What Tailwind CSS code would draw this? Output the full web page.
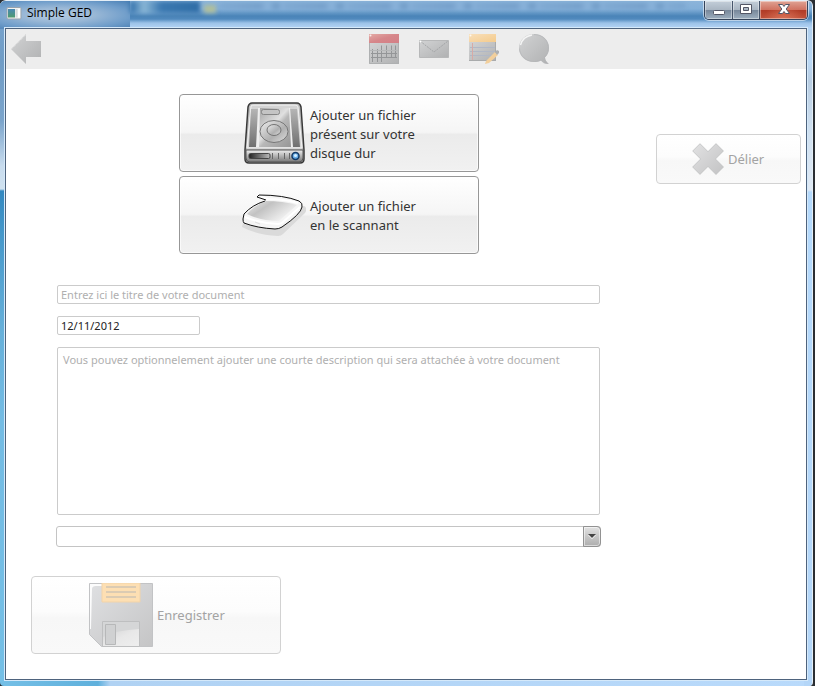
<!DOCTYPE html>
<html lang="fr">
<head>
<meta charset="utf-8">
<meta name="viewport" content="width=device-width, initial-scale=1">
<title>Simple GED</title>
<script src="https://cdn.jsdelivr.net/npm/@tailwindcss/browser@4"></script>
</head>
<body class="h-screen bg-[#2a2e33] pr-0.5 font-['Noto_Sans','Open_Sans',sans-serif] text-[#333]">
<div class="relative flex h-full flex-col overflow-hidden rounded-t-md rounded-b-sm border-t border-r border-[#e4eef6] bg-[linear-gradient(90deg,#74bfe6_0,#5fb0dc_98px,#b0d2f3_110px,#b9dafb_100%)] px-1 pb-1.5">
  <!-- Glass reflections behind the title bar and down the frame edges -->
  <div class="absolute top-0 bottom-1.5 left-0 w-2 bg-[linear-gradient(180deg,#7ba6cf_0,#6f9cc6_60px,#7ba5cc_120px,#c8dcee_165px,#d0e2f0_188px,#3388c0_190px,#4497ca_230px,#66b0da_330px,#74bce4_420px,#74bfe6_100%)]"></div>
  <div class="absolute inset-y-0 right-0 w-2 bg-[linear-gradient(180deg,#a9c8e6_0,#bad8f5_60px,#b8cde2_80px,#cfe0f0_130px,#dfe9f4_189px,#b4d9fc_191px,#b4d6f8_100%)]"></div>
  <div class="absolute inset-x-0 top-0 h-7 bg-[linear-gradient(180deg,#8cb4da_0,#83afd8_8px,#4a84b8_15px,#5089bd_18px,#9cc2e8_22px,#b4d4f5_27px)]"></div>
  <div class="absolute top-0 left-0 h-7 w-[130px] bg-[radial-gradient(ellipse_at_45%_50%,#b3cae2_0,#9ab8d6_35%,#6f9dca_70%,#4a80b5_100%)]"></div>
  <div class="absolute top-0 left-[130px] h-3 w-[70px] bg-[linear-gradient(90deg,#2d6ca8,#8ab7d6_20%,#3a78b0_45%,#2f6da6)] blur-[2px]"></div>
  <div class="absolute top-1 left-[204px] h-2 w-3 bg-[#b0bf9c] blur-[2px]"></div>
  <div class="absolute top-0.5 left-[220px] h-1.5 w-[465px] bg-[repeating-linear-gradient(90deg,#7fa9d2_0,#759fca_40px,#8cb5dc_48px,#6d98c4_56px,#8cb5dc_64px)] blur-[2px]"></div>

  <header class="relative flex h-[27px] shrink-0 items-start justify-between">
    <div class="flex h-6 items-center gap-[5px] pl-0.5">
      <svg class="h-3.5 w-4" viewBox="0 0 16 14" aria-hidden="true">
        <defs><linearGradient id="app" x2="0" y2="1"><stop stop-color="#4888b4"/><stop offset="1" stop-color="#4f9b6d"/></linearGradient></defs>
        <rect x="1" y="1.500" width="14" height="11.500" rx="1" fill="#f3f3f1" stroke="#98a3ad"/>
        <rect x="2" y="3" width="7" height="8.500" fill="url(#app)"/>
        <path d="M9.500 3h2v8.500h-2z" fill="#d6dadb"/><path d="M12 3h2v8.500h-2z" fill="#fff"/>
      </svg>
      <h1 class="text-[12px] leading-4 font-['Open_Sans',sans-serif] text-black">Simple GED</h1>
    </div>
    <div class="flex h-[19px] overflow-hidden rounded-b-[5px] border border-t-0 border-[#34435a] shadow-[0_0_0_1px_#ffffff88]">
      <button type="button" aria-label="Réduire" class="flex w-7 items-center justify-center border-r border-[#46556b] bg-[linear-gradient(180deg,#c3ced9_0,#a9b5c2_50%,#77879a_51%,#9eafbf_100%)] shadow-[inset_0_0_0_1px_#ffffff66]">
        <svg class="h-4 w-4" viewBox="0 0 16 16" aria-hidden="true"><rect x="2.500" y="8.500" width="11" height="4" rx="1" fill="#fff" stroke="#535666"/></svg>
      </button>
      <button type="button" aria-label="Agrandir" class="flex w-[27px] items-center justify-center border-r border-[#46556b] bg-[linear-gradient(180deg,#c3ced9_0,#a9b5c2_50%,#77879a_51%,#9eafbf_100%)] shadow-[inset_0_0_0_1px_#ffffff66]">
        <svg class="h-4 w-4" viewBox="0 0 16 16" aria-hidden="true"><path fill="#fff" fill-rule="evenodd" stroke="#535666" d="M2.500 2.500h11v9h-11zM5.500 5.500v3h5v-3z"/></svg>
      </button>
      <button type="button" aria-label="Fermer" class="flex w-[47px] items-center justify-center bg-[radial-gradient(ellipse_at_50%_100%,#e8856a99,transparent_60%),linear-gradient(180deg,#e0a394_0,#cf7261_48%,#b03a25_50%,#c2533a_100%)] shadow-[inset_0_0_0_1px_#ffffff66]">
        <svg class="h-4 w-4" viewBox="0 0 16 16" aria-hidden="true"><path d="M2.500 2.500h4L8 4.500l1.500-2h4L10.200 7l3.300 4.500h-4L8 9.500l-1.500 2h-4L5.800 7z" fill="#fff" stroke="#535666"/></svg>
      </button>
    </div>
  </header>

  <main class="relative mx-px flex min-h-0 flex-1 flex-col border border-[#4e637d] bg-white shadow-[0_0_0_1px_#d5e9fa]">
    <nav class="flex h-10 shrink-0 items-center bg-[#ededed]" aria-label="Navigation">
      <div class="flex flex-1 pl-1">
        <button type="button" aria-label="Retour">
          <svg class="h-8 w-8" viewBox="0 0 32 32" aria-hidden="true">
            <defs><linearGradient id="g" x2="1" y2="1"><stop stop-color="#d2d3d4"/><stop offset="1" stop-color="#b0b1b2"/></linearGradient></defs>
            <path d="M1 16 16 1v7h15v16H16v7z" fill="url(#g)"/><path d="M2 15.500 15.500 2" stroke="#eee" stroke-dasharray="1 1" fill="none"/>
          </svg>
        </button>
      </div>
      <div class="flex gap-[18px]">
        <button type="button" aria-label="Calendrier">
          <svg class="h-8 w-8" viewBox="0 0 32 32" aria-hidden="true">
            <defs><linearGradient id="r" x2="1" y2="1"><stop stop-color="#e3aaa5"/><stop offset=".5" stop-color="#d6868a"/><stop offset="1" stop-color="#d47f86"/></linearGradient></defs>
            <path d="M1 10h30v21H1z" fill="url(#g)"/><path d="M1 1h30v9H1z" fill="url(#r)"/>
            <path d="M1.500 10v20.500h29V10" stroke="#aeb0b1" fill="none"/>
            <path d="M4.500 16v13M9.500 16v13M13.500 12.500V29M18.500 12.500V25M23.500 12.500V25M27.500 12.500V25M3 20.500h26M3 24.500h26" stroke="#949698" fill="none"/>
            <path d="M2 17.500h28" stroke="#b5b7b8"/><circle cx="2.500" cy="2.500" r="1" fill="#fff" opacity=".8"/>
          </svg>
        </button>
        <button type="button" aria-label="Messages">
          <svg class="h-8 w-8" viewBox="0 0 32 32" aria-hidden="true"><path d="M1.500 7.500h29v17h-29z" fill="url(#g)" stroke="#b7b8b9"/><path d="m2 8 14 11L30 8" fill="none" stroke="#a3a5a7" stroke-dasharray="2 1"/><circle cx="2.500" cy="8.500" r="1" fill="#fff"/></svg>
        </button>
        <button type="button" aria-label="Notes">
          <svg class="h-8 w-8" viewBox="0 0 32 32" aria-hidden="true">
            <defs><linearGradient id="o" x2="1" y2="1"><stop stop-color="#f8dfbb"/><stop offset="1" stop-color="#f4cb8c"/></linearGradient></defs>
            <path d="M1 9h27v19H1z" fill="url(#g)"/><path d="M1 1h27v8H1z" fill="url(#o)"/><path d="M1 27.500h26.500V9" fill="none" stroke="#a9abac"/>
            <path d="M2 14.500h25M2 18.500h25M2 22.500h25" stroke="#b1b8c6"/><path d="M4.500 10v17" stroke="#d7aaa5"/>
            <path d="m18 28 9-9 3 3-9 8-4 1z" fill="#f2cf9c"/><path d="m27 19 2-2 2 1v2l-2 2z" fill="#aeb0b2"/><circle cx="2.500" cy="2.500" r="1" fill="#fff" opacity=".8"/>
          </svg>
        </button>
        <button type="button" aria-label="Commentaires">
          <svg class="h-8 w-8" viewBox="0 0 32 32" aria-hidden="true"><path d="M16 1c8.500 0 15 6 15 14 0 4-1.500 7-4 9.500 0 2.500 1.500 4.500 4 6.500-3 0-6-1-8-3.500-2 1-4.500 1.500-7 1.500C7.500 29 1 23 1 15S7.500 1 16 1z" fill="url(#g)"/><path d="M2.500 12C4 6.500 8 3 14 2" fill="none" stroke="#f5f5f5" stroke-width="1.500"/><path d="M16 1.500c8 0 14.500 5.500 14.500 13.500 0 4-1.500 7-4 9.500 0 2.500 1.500 4 3 6-3 0-5-1-6.500-3.500-2 1-4.500 1.500-7 1.500-8 0-14.500-6-14.500-13" fill="none" stroke="#b4b6b7" stroke-width=".7"/></svg>
        </button>
      </div>
      <div class="w-[256px]"></div>
    </nav>

    <form class="flex min-h-0 flex-1 justify-between pt-[25px] pr-[5px] pl-[25px]">
      <div class="flex w-[570px] flex-col">
        <div class="flex flex-col gap-1 pr-[122px] pl-[148px] text-[13px] leading-[19px]">
          <button type="button" class="flex h-[78px] items-center gap-1 rounded-[4px] border border-[#979797] bg-[linear-gradient(180deg,#fff_0,#f5f5f5_49%,#ebebeb_52%,#f1f1f1_100%)] pl-[62px] text-left shadow-[inset_0_0_0_1px_#ffffffaa]">
            <svg class="h-16 w-16 shrink-0" viewBox="0 0 64 64" aria-hidden="true">
              <defs>
                <linearGradient id="h1" x2="1" y2="1"><stop stop-color="#a0a0a0"/><stop offset=".45" stop-color="#e0e0e0"/><stop offset=".55" stop-color="#b8b8b8"/><stop offset="1" stop-color="#959595"/></linearGradient>
                <linearGradient id="h2" x2="0" y2="1"><stop stop-color="#efefef"/><stop offset="1" stop-color="#777"/></linearGradient>
                <linearGradient id="h3" x2="1" y2="1"><stop stop-color="#eee"/><stop offset=".6" stop-color="#b0b0b0"/><stop offset="1" stop-color="#e0e0e0"/></linearGradient>
                <linearGradient id="h4"><stop stop-color="#222"/><stop offset="1" stop-color="#bbb"/></linearGradient>
                <linearGradient id="h5" x2="0" y2="1"><stop stop-color="#b5b5b5"/><stop offset="1" stop-color="#707070"/></linearGradient>
              </defs>
              <path d="M10 2h45q3 0 4 4l3 43v9q0 4-4 4H7q-4 0-4-4v-9L6 6q1-4 4-4z" fill="#bcbcbc" stroke="#393939" stroke-width="1.500"/>
              <path d="M9 5q1-1 3-1h41q3 0 3 2l4 41H5z" fill="#d4d4d4" stroke="#f3f3f3"/>
              <path d="M9 8h8l-1 38H7zM48 8h7l3 38h-8z" fill="url(#h5)"/>
              <path d="M17 7h31l2 39H15z" fill="url(#h1)"/>
              <path d="M16 7h2l-1 39h-3zM47 7h1l3 39h-2z" fill="#eee"/>
              <rect x="19.500" y="8.500" width="18" height="5" rx="2" fill="#c4c4c4" stroke="#858585"/>
              <ellipse cx="32" cy="30.500" rx="14" ry="11" fill="url(#h3)" stroke="#777"/>
              <ellipse cx="32" cy="29" rx="7" ry="5.500" fill="url(#h3)" stroke="#747474"/>
              <path d="M4 49h57v8q0 4-4 4H8q-4 0-4-4z" fill="url(#h2)" stroke="#555"/>
              <rect x="7" y="52.500" width="21" height="5" rx="1.500" fill="url(#h4)" stroke="#444"/>
              <path d="M30.500 52v6M36.500 52v6M42.500 52v6M47.500 52v6" stroke="#666"/>
              <circle cx="53.500" cy="55" r="3.500" fill="#68aee8" stroke="#143a66" stroke-width="1.500"/><circle cx="53.500" cy="54.500" r="1.500" fill="#d7efff"/>
            </svg>
            <span class="pt-0.5">Ajouter un fichier<br>présent sur votre<br>disque dur</span>
          </button>
          <button type="button" class="flex h-[78px] items-center gap-1 rounded-[4px] border border-[#979797] bg-[linear-gradient(180deg,#fff_0,#f5f5f5_49%,#ebebeb_52%,#f1f1f1_100%)] pl-[62px] text-left shadow-[inset_0_0_0_1px_#ffffffaa]">
            <svg class="h-16 w-16 shrink-0" viewBox="0 0 64 64" aria-hidden="true">
              <defs><linearGradient id="s" x2="1" y2=".6"><stop stop-color="#eee"/><stop offset=".4" stop-color="#c2c2c2"/><stop offset="1" stop-color="#f8f8f8"/></linearGradient></defs>
              <path d="M1 40 0 44q15 8 36 9 3 0 5-2l22-21q3-5-1-7z" fill="#dadada"/>
              <path d="M1 36 2 31Q10 22 23 18l1-1-9-3 2-2q25 0 40 6 4 2 3 6-1 7-20 20-3 2-7 2-18-1-31-6-1-1-1-4z" fill="#f5f5f5"/>
              <path d="M24 18q17 0 31 4L37 38q-18 0-32-7 8-9 19-13z" fill="url(#s)"/>
              <path d="m18 13 8 3q16 0 30 4" fill="none" stroke="#fff" stroke-width="2"/>
              <path d="M3 34q14 6 33 7 3 0 5-2l17-15" fill="none" stroke="#fff" stroke-width="2"/><path d="m13 39 5 2" stroke="#ddd"/>
              <path d="M24 17l-9-3 2-2q25 0 40 6 4 2 3 6-1 7-20 20-3 2-7 2-18-1-31-6-1-1-1-4l1-5Q10 22 23 18" fill="none" stroke="#111"/>
            </svg>
            <span class="pt-0.5">Ajouter un fichier<br>en le scannant</span>
          </button>
        </div>

        <div class="mt-[31px] flex flex-col items-start gap-3 pr-px pl-[26px] text-[11px] leading-4">
          <input type="text" aria-label="Titre du document" placeholder="Entrez ici le titre de votre document" class="h-[19px] w-full rounded-[2px] border border-[#cbcbcb] bg-white px-[3px] placeholder:text-[#afafaf] placeholder:opacity-100">
          <input type="text" aria-label="Date du document" value="12/11/2012" class="h-[19px] w-[143px] rounded-[2px] border border-[#cbcbcb] bg-white px-[3px] text-[#222]">
          <textarea aria-label="Description du document" placeholder="Vous pouvez optionnelement ajouter une courte description qui sera attachée à votre document" class="h-[168px] w-full resize-none rounded-[2px] border border-[#cbcbcb] bg-white px-[5px] py-1 placeholder:text-[#afafaf] placeholder:opacity-100"></textarea>
          <div class="relative -mx-px -mt-px self-stretch">
            <select aria-label="Type de document" class="block h-[21px] w-full appearance-none rounded-[3px] border border-[#c4c4c4] bg-white px-1"><option></option></select>
            <div class="pointer-events-none absolute inset-y-0 right-0 flex w-[18px] items-center justify-center rounded-r-[4px] border border-[#929292] bg-linear-to-b from-[#e2e2e2] to-[#adadad] shadow-[inset_0_0_0_1px_#ffffff88]">
              <svg class="h-[5px] w-2" viewBox="0 0 8 5" aria-hidden="true"><path d="M0 1h8L4 5z" fill="#fff"/><path d="M0 0h8L4 4z" fill="#444"/></svg>
            </div>
          </div>
        </div>

        <button type="submit" disabled class="mt-[29px] flex h-[78px] w-[250px] items-center gap-1 rounded-[4px] border border-[#d2d2d2] bg-[linear-gradient(180deg,#fff_0,#fcfcfc_45%,#f7f7f7_54%,#f9f9f9_100%)] pl-[57px] text-[13px] text-[#a3a3a3]">
          <svg class="h-16 w-16 shrink-0" viewBox="0 0 64 64" aria-hidden="true">
            <defs><linearGradient id="f" x2="1" y2="1"><stop stop-color="#dfe0e2"/><stop offset="1" stop-color="#c5c5c6"/></linearGradient><linearGradient id="f2" x2="1" y2="1"><stop stop-color="#d3d3d4"/><stop offset=".5" stop-color="#e8e8e8"/><stop offset="1" stop-color="#eee"/></linearGradient></defs>
            <path d="M.5.500h63v63H12.500l-12-12z" fill="url(#f)" stroke="#c2c3c5"/>
            <path d="M2 46 3 6q0-3 4-3h6V1H1v45z" fill="#fff" opacity=".9"/>
            <path d="M13 0h38v19H13z" fill="#fddfb3" stroke="#f1d3a9"/><path d="M17 4h30M17 9h30M17 14h30" stroke="#dbcbb3" stroke-width="2"/>
            <path d="M13.500 38.500h37v25h-37z" fill="#d5d6d7" stroke="#bebfc0"/><path d="M14 54q14-7 36-8v17H14z" fill="url(#f2)"/><path d="M16.500 41.500h10v20h-10z" fill="#d0d1d2" stroke="#b7b8b9"/>
          </svg>
          <span class="pt-0.5">Enregistrer</span>
        </button>
      </div>

      <button type="button" disabled class="mt-10 flex h-[50px] w-[145px] items-center gap-1 rounded-[4px] border border-[#d2d2d2] bg-[linear-gradient(180deg,#fff_0,#fcfcfc_45%,#f7f7f7_54%,#f9f9f9_100%)] pl-[35px] text-[13px] text-[#a3a3a3]">
        <svg class="h-8 w-8 shrink-0" viewBox="0 0 32 32" aria-hidden="true">
          <defs><linearGradient id="x" x2="1" y2="1"><stop stop-color="#e2e2e3"/><stop offset="1" stop-color="#c2c2c3"/></linearGradient></defs>
          <path d="m8 0 8 8 8-8 8 8-8 8 8 8-8 8-8-8-8 8-8-8 8-8-8-8z" fill="url(#x)"/><path d="m1 8 7-7 8 8 8-8 7 7-8 8 8 8-7 7-8-8-8 8-7-7 8-8z" fill="none" stroke="#c6c7c8" stroke-width=".6"/>
        </svg>
        <span class="pt-0.5">Délier</span>
      </button>
    </form>
  </main>
</div>
</body>
</html>
